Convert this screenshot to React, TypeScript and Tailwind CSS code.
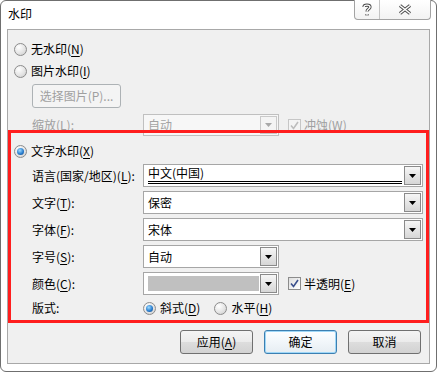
import React from "react"

const font = { fontFamily: '"Noto Sans CJK SC", "Noto Sans", sans-serif' }

function Key({ k }: { k: string }) {
    return (
        <>
            (<span className="underline underline-offset-2">{k}</span>)
        </>
    )
}

function Radio({ checked }: { checked?: boolean }) {
    return (
        <div className="w-[13px] h-[13px] rounded-full border border-[#8c8c8c] bg-[radial-gradient(circle_at_35%_30%,#ffffff,#e2e2e2_60%,#c8c8c8)] flex items-center justify-center shrink-0">
            {checked && (
                <div className="w-[7px] h-[7px] rounded-full bg-[radial-gradient(circle_at_40%_35%,#9fdcff,#2b7fd0_55%,#0e3f7a)]" />
            )}
        </div>
    )
}

function Check({ disabled }: { disabled?: boolean }) {
    return (
        <div
            className={
                disabled
                    ? "w-[13px] h-[13px] border border-[#c6c6c6] bg-[#f4f4f4] flex items-center justify-center shrink-0"
                    : "w-[13px] h-[13px] border border-[#8c8c8c] bg-[linear-gradient(135deg,#dedede,#ffffff)] flex items-center justify-center shrink-0"
            }
        >
            <svg width="9" height="9" viewBox="0 0 9 9">
                <path
                    d="M1 4.5 L3.5 7.5 L8 1"
                    fill="none"
                    stroke={disabled ? "#bdbdbd" : "#3a4f8c"}
                    strokeWidth="1.6"
                />
            </svg>
        </div>
    )
}

function Arrow({ disabled }: { disabled?: boolean }) {
    return (
        <div
            className={
                disabled
                    ? "w-[17px] h-full border border-[#c9c9c9] bg-[#f4f4f4] flex items-center justify-center"
                    : "w-[17px] h-full border border-[#8a8a8a] bg-[linear-gradient(#f6f6f6,#e6e6e6_50%,#d6d6d6)] flex items-center justify-center"
            }
        >
            <svg width="7" height="4" viewBox="0 0 7 4">
                <path d="M0 0 H7 L3.5 4 Z" fill={disabled ? "#a8a8a8" : "#000"} />
            </svg>
        </div>
    )
}

function Combo({
    width,
    children,
    disabled,
}: {
    width: string
    children?: React.ReactNode
    disabled?: boolean
}) {
    return (
        <div
            className={
                (disabled
                    ? "border-[#c0c0c0] bg-[#f7f7f7] text-[#a3a3a3] "
                    : "border-[#a6a6a6] bg-white text-black ") +
                width +
                " h-full border flex items-stretch p-[1px] gap-[1px]"
            }
        >
            <div className="flex-1 flex items-center pl-[3px] min-w-0">{children}</div>
            <Arrow disabled={disabled} />
        </div>
    )
}

function Row({ label, children }: { label: React.ReactNode; children: React.ReactNode }) {
    return (
        <div className="h-[23px] flex items-stretch pl-[24px]">
            <div className="w-[111px] flex items-center">{label}</div>
            {children}
        </div>
    )
}

function Btn({ children, primary }: { children: React.ReactNode; primary?: boolean }) {
    return (
        <div
            className={
                primary
                    ? "w-[73px] h-[24px] rounded-[3px] border border-[#3c7fb1] shadow-[inset_0_0_0_1px_#9fd7f7] bg-[linear-gradient(#fdfeff,#f1f6fa_50%,#e6edf2)] flex items-center justify-center"
                    : "w-[73px] h-[24px] rounded-[3px] border border-[#707070] bg-[linear-gradient(#f4f4f4,#ebebeb_50%,#dddddd_51%,#d2d2d2)] flex items-center justify-center"
            }
        >
            {children}
        </div>
    )
}

export default function App() {
    return (
        <div className="w-[437px] h-[372px] bg-white" style={font}>
            <div className="relative w-[437px] h-[372px] border border-[#6f6f6f] rounded-[6px] bg-white flex flex-col text-[12px] leading-none text-black">
                {/* title bar */}
                <div className="h-[28px] flex items-start justify-between">
                    <div className="pl-[7px] pt-[7px] text-[12px]">水印</div>
                    <div className="flex mr-[5px] -mt-[1px] h-[20px] border border-t-0 border-[#a3a3a3] rounded-b-[4px] bg-[linear-gradient(#ffffff,#f3f3f3)]">
                        <div className="w-[25px] flex items-center justify-center border-r border-[#c4c4c4]">
                            <svg width="10" height="14" viewBox="0 0 10 14">
                                <path
                                    d="M2 4 C2 1.5 8 1.5 8 4 C8 6 5 6 5 8.5 M5 11 V12.5"
                                    fill="none"
                                    stroke="#4a4a4a"
                                    strokeWidth="3.2"
                                />
                                <path
                                    d="M2 4 C2 1.5 8 1.5 8 4 C8 6 5 6 5 8.5 M5 11 V12.5"
                                    fill="none"
                                    stroke="#ffffff"
                                    strokeWidth="1.4"
                                />
                            </svg>
                        </div>
                        <div className="w-[50px] flex items-center justify-center">
                            <svg width="14" height="11" viewBox="0 0 14 11">
                                <path d="M2 1.5 L12 9.5 M12 1.5 L2 9.5" fill="none" stroke="#4a4a4a" strokeWidth="3.4" />
                                <path d="M2 1.5 L12 9.5 M12 1.5 L2 9.5" fill="none" stroke="#ffffff" strokeWidth="1.5" />
                            </svg>
                        </div>
                    </div>
                </div>

                {/* body */}
                <div className="mx-[6px] mb-[7px] flex-1 border border-[#a8a8a8] bg-[#f0f0f0] flex flex-col pt-[8px]">
                    <div className="h-[22px] flex items-center pl-[6px] gap-[4px]">
                        <Radio />
                        <span>无水印<Key k="N" /></span>
                    </div>
                    <div className="h-[22px] flex items-center pl-[6px] gap-[4px]">
                        <Radio />
                        <span>图片水印<Key k="I" /></span>
                    </div>
                    <div className="mt-[2px] ml-[24px] w-[89px] h-[24px] rounded-[3px] border border-[#adb2b5] bg-[#f4f4f4] text-[#a0a0a0] flex items-center justify-center">
                        选择图片(P)...
                    </div>
                    <div className="mt-[6px] h-[22px] flex items-stretch pl-[24px] text-[#a0a0a0]">
                        <div className="w-[111px] flex items-center">
                            缩放<Key k="L" />:
                        </div>
                        <Combo width="w-[136px]" disabled>
                            自动
                        </Combo>
                        <div className="ml-[9px] flex items-center gap-[3px]">
                            <Check disabled />
                            <span>冲蚀<Key k="W" /></span>
                        </div>
                    </div>

                    <div className="mt-[4px] h-[22px] flex items-center pl-[6px] gap-[4px]">
                        <Radio checked />
                        <span>文字水印<Key k="X" /></span>
                    </div>

                    <div className="mt-[2px] flex flex-col gap-[4px]">
                        <Row label={<span>语言(国家/地区)<Key k="L" />:</span>}>
                            <Combo width="w-[280px]">
                                <div className="w-full h-full flex flex-col justify-between pt-[1px] pb-[1px]">
                                    <span>中文(中国)</span>
                                    <div className="mr-[1px] h-[3px] border-y border-black" />
                                </div>
                            </Combo>
                        </Row>
                        <Row label={<span>文字<Key k="T" />:</span>}>
                            <Combo width="w-[280px]">保密</Combo>
                        </Row>
                        <Row label={<span>字体<Key k="F" />:</span>}>
                            <Combo width="w-[280px]">宋体</Combo>
                        </Row>
                        <Row label={<span>字号<Key k="S" />:</span>}>
                            <Combo width="w-[136px]">自动</Combo>
                        </Row>
                        <Row label={<span>颜色<Key k="C" />:</span>}>
                            <Combo width="w-[136px]">
                                <div className="w-full h-[15px] bg-[#c0c0c0]" />
                            </Combo>
                            <div className="ml-[9px] flex items-center gap-[3px]">
                                <Check />
                                <span>半透明<Key k="E" /></span>
                            </div>
                        </Row>
                    </div>

                    <div className="mt-[3px] h-[20px] flex items-center pl-[24px]">
                        <div className="w-[111px]">版式:</div>
                        <div className="flex items-center gap-[4px]">
                            <Radio checked />
                            <span>斜式<Key k="D" /></span>
                        </div>
                        <div className="ml-[14px] flex items-center gap-[4px]">
                            <Radio />
                            <span>水平<Key k="H" /></span>
                        </div>
                    </div>

                    <div className="mt-[12px] flex justify-end gap-[11px] pr-[8px]">
                        <Btn>
                            <span>应用<Key k="A" /></span>
                        </Btn>
                        <Btn primary>确定</Btn>
                        <Btn>取消</Btn>
                    </div>
                </div>

                {/* red annotation frame */}
                <div className="absolute left-[7px] top-[129px] w-[421px] h-[193px] border-[3px] border-[#ff1e1e] pointer-events-none" />
            </div>
        </div>
    )
}
